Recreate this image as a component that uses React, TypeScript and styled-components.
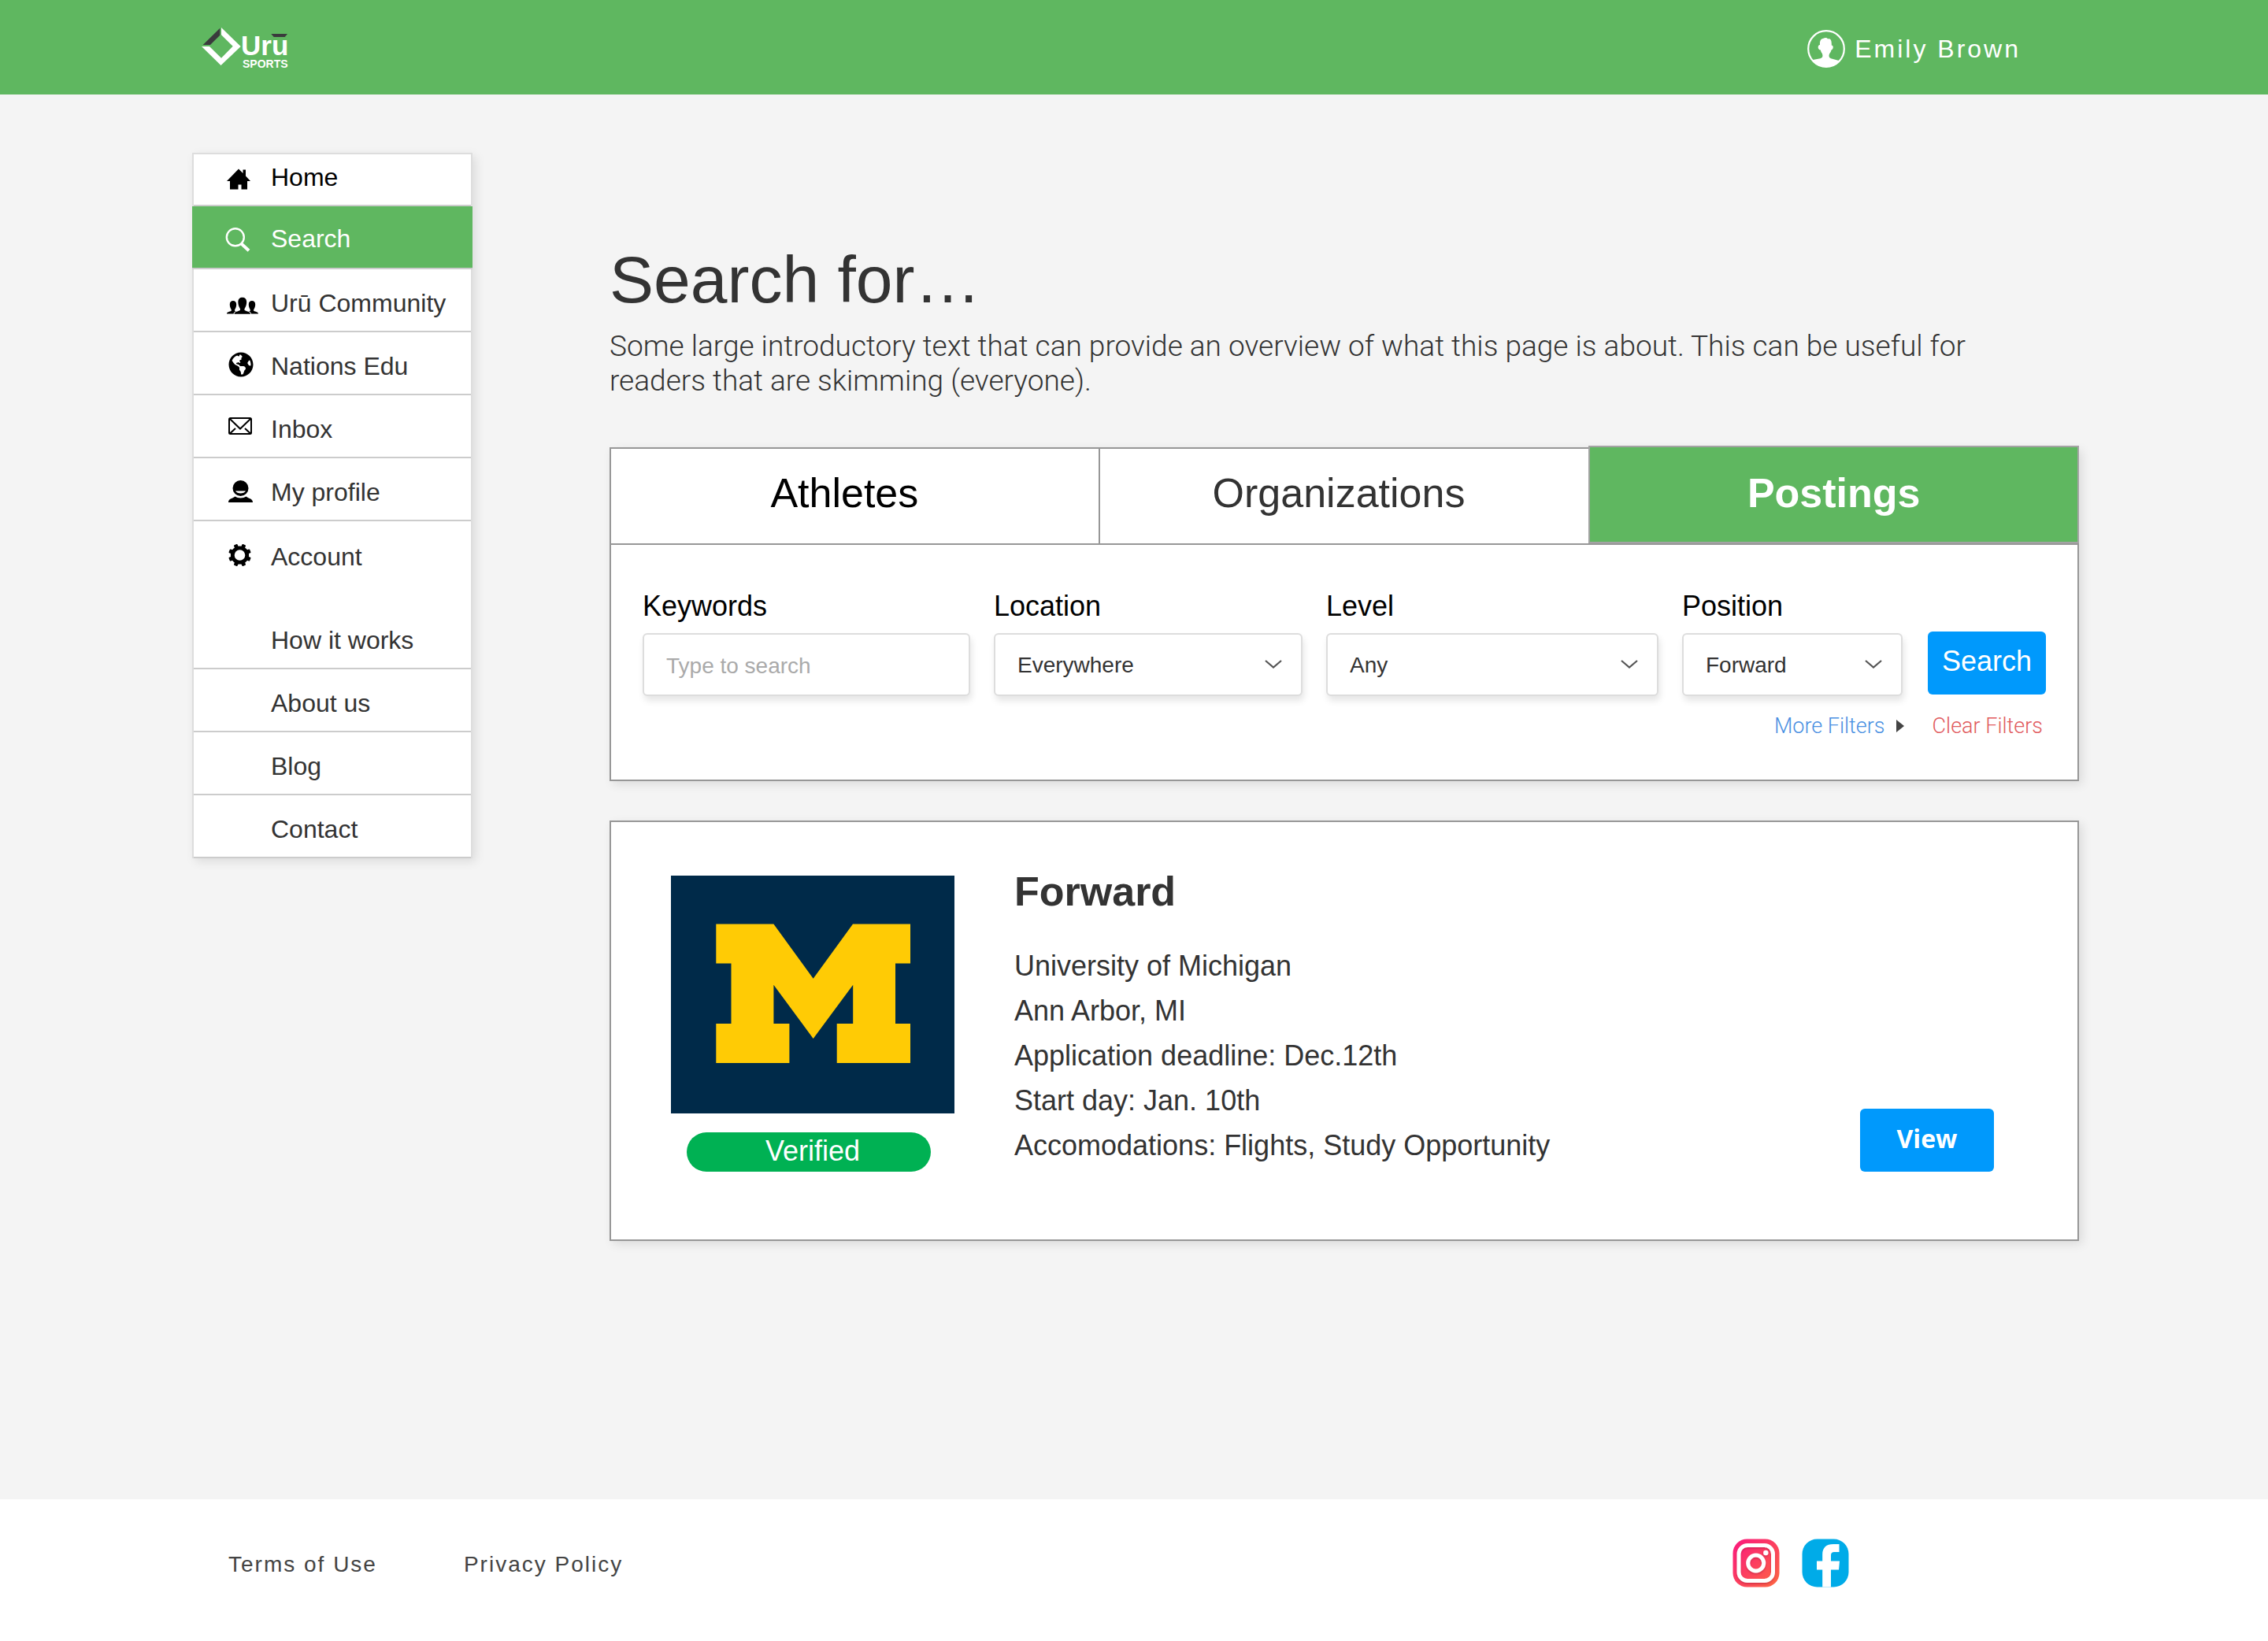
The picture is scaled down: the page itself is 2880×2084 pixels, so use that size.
import React from 'react';
import styled, { createGlobalStyle, css } from 'styled-components';
import { FaGlobeAmericas } from 'react-icons/fa';

const color = {
  green: '#5fb760',
  blue: '#0099fc',
  ink: '#333333',
  page: '#f4f4f4',
  frame: '#979797',
};

const shadow = '4px 4px 12px rgba(0, 0, 0, 0.1)';

const GlobalStyle = createGlobalStyle`
  *, *::before, *::after { box-sizing: border-box; }
  body {
    margin: 0;
    background: ${color.page};
    color: ${color.ink};
    font-family: "Liberation Sans", Arial, sans-serif;
  }
  a { color: inherit; text-decoration: none; }
  button, input, select { font-family: inherit; }
  svg { display: block; flex: none; }
`;

const Page = styled.div`
  display: flex;
  flex-direction: column;
  min-height: 100vh;
`;

/* ---------- header ---------- */

const Header = styled.header`
  display: flex;
  align-items: center;
  justify-content: space-between;
  height: 120px;
  padding: 0 314px 0 256px;
  background: ${color.green};
  color: #fff;
`;

const UserLink = styled.a`
  display: flex;
  align-items: center;
  gap: 12px;
  padding-top: 4px;
  font-size: 32px;
  line-height: 40px;
  letter-spacing: 3px;
`;

const Logo = () => (
  <svg width="112" height="50" viewBox="0 0 112 50" overflow="visible" role="img" aria-label="Urū Sports">
    <path d="M25 0 49.7 24 24.5 48 0 24H10L25 38.7 39.7 23.7 25 9.3Z" fill="#fff" />
    <path d="M23.3.7V9.7L11 22H1.7Z" fill="#3a3a3c" />
    <path d="M88.3 8H109L105.7 12H91.7Z" fill="#3a3a3c" />
    <g fill="#fff" fontFamily="Liberation Sans, Arial, sans-serif" fontWeight="700">
      <text x="50" y="35" fontSize="35">Uru</text>
      <text x="52" y="51" fontSize="14">SPORTS</text>
    </g>
  </svg>
);

const Avatar = () => (
  <svg width="48" height="48" viewBox="0 0 48 48" aria-hidden="true">
    <clipPath id="avatar-ring"><circle cx="24" cy="24" r="23" /></clipPath>
    <circle cx="24" cy="24" r="22.8" fill="none" stroke="#fff" strokeWidth="2.2" />
    <path
      clipPath="url(#avatar-ring)"
      fill="#fff"
      d="M16 19C15.500 13 18 11 20.500 10.800C22 9.600 25 9.600 26 11.400C29.500 11 31 12.500 30.800 19.500C33.500 19.500 33.400 24.500 30.500 25.500C30 28.500 28 29.500 27.600 32C27.400 34.500 28 35.500 30 36.200L40 39L48 48H0L7 38L16.500 36.200C19 35.500 19.600 34.500 19.400 32C19.200 29.500 17.300 28.500 16.800 25.500C13 25 12.600 19.500 16 19Z"
    />
  </svg>
);

/* ---------- sidebar ---------- */

const Body = styled.div`
  flex: 1;
  display: flex;
  align-items: flex-start;
  gap: 174px;
  padding: 74px 240px 0 244px;
`;

const Sidebar = styled.nav`
  flex: none;
  width: 356px;
  border: 2px solid #ddd;
  border-bottom: 0;
  background: #fff;
  box-shadow: ${shadow};
`;

const NavLink = styled.a<{ $kind?: 'first' | 'active' | 'last' }>`
  display: flex;
  gap: 14px;
  padding: 23px 0 15px 40px;
  border-bottom: 2px solid #ccc;
  font-size: 32px;
  line-height: 40px;
  white-space: nowrap;
  ${({ $kind }) => $kind === 'first' && css`
    padding-top: 9px;
    color: #000;
  `}
  ${({ $kind }) => $kind === 'active' && css`
    margin: 0 -2px;
    padding: 21px 0 17px 42px;
    background: ${color.green};
    background-clip: padding-box;
    color: #fff;
  `}
  ${({ $kind }) => $kind === 'last' && css`
    padding: 25px 0 43px 40px;
    border-bottom: 0;
  `}
`;

const NavGlyph = ({ children }: { children?: React.ReactNode }) => (
  <svg width="44" height="40" viewBox="0 0 44 40" fill="#000" aria-hidden="true">{children}</svg>
);

const person = 'M0 28.500C0 25.500 4.500 25.500 6.800 24C8 22.500 4.500 20 4.500 14.500C4.500 10.800 6.500 9 9.500 9C12.500 9 14.500 10.800 14.500 14.500C14.500 20 11 22.500 12.200 24C14.500 25.500 19 25.500 19 28.500Z';

const icons: Record<string, React.ReactNode> = {
  home: <path d="M17 9.500 22.500 15V10.500H26V18.500L32 25H28V35.500H20.500V29.500H16.500V35.500H6V25H2Z" />,
  search: (
    <g fill="none" stroke="#fff">
      <circle cx="12.800" cy="18.300" r="11" strokeWidth="2.400" />
      <path d="M20.500 26.500 30 35.300" strokeWidth="4" />
    </g>
  ),
  community: (
    <g>
      <path transform="translate(2 9.500) scale(.84)" d={person} />
      <path transform="translate(26 9.500) scale(.84)" d={person} />
      <path transform="translate(11.500 3) scale(1.080)" d={person} stroke="#fff" strokeWidth="1.800" paintOrder="stroke" />
    </g>
  ),
  globe: <FaGlobeAmericas x="4" y="2" width="30" height="31" color="#000" />,
  inbox: (
    <g fill="none" stroke="#000" strokeWidth="2">
      <rect x="5" y="6" width="28" height="20" rx="1.500" />
      <path d="M6 7 19 19.500 32 7M6 25.500 13 19M32 25.500 25 19" />
    </g>
  ),
  profile: (
    <g>
      <path d="M4 33C4 28 10 28 12.500 25.500C16 28 23 28 26.500 25.500C29 28 35 28 35 33Z" />
      <circle cx="19.500" cy="15" r="10" />
      <path d="M13 18.500H26C24 22.500 15 22.500 13 18.500Z" fill="#fff" />
    </g>
  ),
  gear: (
    <g>
      <circle cx="18.500" cy="18" r="9.200" fill="none" stroke="#000" strokeWidth="4.800" />
      {[22.5, 67.5, 112.5, 157.5, 202.5, 247.5, 292.5, 337.5].map((turn) => (
        <rect key={turn} x="16" y="3.600" width="5" height="6" rx="1" transform={`rotate(${turn} 18.500 18)`} />
      ))}
    </g>
  ),
};

const navItems: { label: string; icon?: string; kind?: 'first' | 'active' | 'last' }[] = [
  { label: 'Home', icon: 'home', kind: 'first' },
  { label: 'Search', icon: 'search', kind: 'active' },
  { label: 'Urū Community', icon: 'community' },
  { label: 'Nations Edu', icon: 'globe' },
  { label: 'Inbox', icon: 'inbox' },
  { label: 'My profile', icon: 'profile' },
  { label: 'Account', icon: 'gear', kind: 'last' },
  { label: 'How it works' },
  { label: 'About us' },
  { label: 'Blog' },
  { label: 'Contact' },
];

/* ---------- main column ---------- */

const light = css`
  font-family: Roboto, "Liberation Sans", sans-serif;
  font-weight: 300;
`;

const Main = styled.main`
  flex: 1;
  min-width: 0;
  padding: 113px 0 50px;
`;

const Title = styled.h1`
  margin: 0;
  font-size: 84px;
  font-weight: 400;
  line-height: 96px;
`;

const Intro = styled.p`
  ${light}
  max-width: 1780px;
  margin: 15px 0 62px;
  font-size: 37px;
  line-height: 44px;
`;

const Panel = styled.section`
  border: 2px solid ${color.frame};
  background: #fff;
  box-shadow: ${shadow};
`;

const Tabs = styled.div`
  display: grid;
  grid-template-columns: repeat(3, 1fr);
  border-bottom: 2px solid ${color.frame};
`;

const Tab = styled.button<{ $active?: boolean; $divider?: boolean; $trail?: number }>`
  padding: 26px ${({ $trail = 0 }) => $trail}px 34px 0;
  border: 0;
  border-right: ${({ $divider }) => ($divider ? `2px solid ${color.frame}` : '0')};
  background: #fff;
  color: ${({ $divider }) => ($divider ? '#000' : color.ink)};
  font-size: 52px;
  line-height: 60px;
  ${({ $active }) => $active && css`
    margin: -4px -2px 0 0;
    padding: 28px 0 32px;
    border: 2px solid #a3a3a3;
    background: ${color.green};
    color: #fff;
    font-weight: 700;
  `}
`;

const Filters = styled.form`
  padding: 56px 40px 50px;
`;

const FilterRow = styled.div`
  display: grid;
  grid-template-columns: 416fr 392fr 422fr 280fr 152px;
  align-items: end;
  gap: 30px;
`;

const Field = styled.div`
  display: flex;
  flex-direction: column;
  gap: 12px;
  min-width: 0;
`;

const Label = styled.label`
  color: #000;
  font-size: 36px;
  line-height: 44px;
`;

const control = css`
  width: 100%;
  height: 80px;
  border: 2px solid #ddd;
  border-radius: 6px;
  background: #fff;
  box-shadow: 2px 6px 8px rgba(0, 0, 0, 0.1);
  color: ${color.ink};
  font-size: 28px;
`;

const TextBox = styled.input`
  ${control}
  padding: 4px 28px 0;
  &::placeholder { color: #aaa; opacity: 1; }
`;

const SelectWrap = styled.div`
  display: grid;
  align-items: center;
  svg {
    grid-area: 1 / 1;
    justify-self: end;
    margin-right: 26px;
    pointer-events: none;
  }
`;

const Select = styled.select`
  ${control}
  grid-area: 1 / 1;
  appearance: none;
  padding: 0 60px 0 28px;
`;

const Button = styled.button<{ $view?: boolean }>`
  height: 80px;
  padding: 0 0 4px;
  border: 0;
  border-radius: 6px;
  background: ${color.blue};
  color: #fff;
  font-size: 36px;
  ${({ $view }) => $view ? css`
    flex: none;
    align-self: flex-end;
    width: 170px;
    padding-bottom: 6px;
    font-family: "Open Sans", "Noto Sans", sans-serif;
    font-size: 32px;
    font-weight: 700;
  ` : css`
    margin: 0 0 2px 2px;
  `}
`;

const FilterLinks = styled.div`
  display: flex;
  justify-content: flex-end;
  align-items: center;
  gap: 36px;
  margin-top: 20px;
  padding-right: 4px;
`;

const FilterLink = styled.a<{ $tone: string }>`
  ${light}
  display: flex;
  align-items: center;
  gap: 14px;
  color: ${({ $tone }) => $tone};
  font-size: 27px;
  line-height: 36px;
`;

const selects = [
  { id: 'location', label: 'Location', value: 'Everywhere' },
  { id: 'level', label: 'Level', value: 'Any' },
  { id: 'position', label: 'Position', value: 'Forward' },
];

const Chevron = () => (
  <svg width="22" height="12" viewBox="0 0 22 12" aria-hidden="true">
    <path d="M1 1 11 9.500 21 1" fill="none" stroke="#555" strokeWidth="2.200" />
  </svg>
);

/* ---------- posting ---------- */

const Posting = styled(Panel)`
  display: flex;
  gap: 76px;
  margin-top: 50px;
  padding: 68px 106px 86px 76px;
`;

const Badge = styled.div`
  width: 310px;
  margin: 24px 0 0 20px;
  padding: 0 0 2px 10px;
  border-radius: 25px;
  background: #00b153;
  color: #fff;
  font-size: 36px;
  line-height: 48px;
  text-align: center;
`;

const Details = styled.div`
  flex: 1;
  min-width: 0;
`;

const PostingTitle = styled.h2`
  margin: 0 0 46px;
  font-size: 52px;
  font-weight: 700;
  line-height: 40px;
`;

const Facts = styled.ul`
  margin: 0;
  padding: 0;
  list-style: none;
  font-size: 36px;
  line-height: 57px;
`;

const MichiganLogo = () => (
  <svg width="360" height="302" viewBox="0 0 360 302" role="img" aria-label="University of Michigan">
    <path d="M0 0H360V302H0Z" fill="#002a49" />
    <path
      fill="#ffcb05"
      d="M57.300 61.500H130.400L180.700 130.700 231 61.500H304V111.500H285V188H304V238H210.700V188H231.200V138.700L180.700 207 130.400 138.700V188H150.400V238H57.300V188H76.500V111.500H57.300Z"
    />
  </svg>
);

/* ---------- footer ---------- */

const Footer = styled.footer`
  display: flex;
  align-items: center;
  height: 180px;
  padding: 0 532px 18px 290px;
  background: #fff;
  color: #444;
  font-size: 28px;
  letter-spacing: 2px;
`;

const FooterLinks = styled.div`
  flex: 1;
  display: flex;
  gap: 110px;
  padding-top: 4px;
`;

const Social = styled.div`
  display: flex;
  gap: 28px;
`;

const Instagram = () => (
  <svg width="60" height="62" viewBox="0 0 60 62" aria-hidden="true">
    <defs>
      <linearGradient id="insta" x1="0" y1="0" x2="1" y2="1">
        <stop offset="0.100" stopColor="#fb1f78" />
        <stop offset="0.900" stopColor="#fd6047" />
      </linearGradient>
      <filter id="insta-depth" x="-20%" y="-20%" width="140%" height="140%">
        <feDropShadow dx="0" dy="1.500" stdDeviation="1" floodColor="#900030" floodOpacity="0.400" />
      </filter>
    </defs>
    <rect x="0.500" y="0.500" width="59" height="61" rx="18" fill="url(#insta)" />
    <g fill="none" stroke="#fff" strokeWidth="5" filter="url(#insta-depth)">
      <rect x="8" y="8.500" width="43.500" height="45" rx="11" />
      <circle cx="29.700" cy="31" r="10" />
      <circle cx="42.300" cy="18" r="3.200" fill="#fff" stroke="none" />
    </g>
  </svg>
);

const Facebook = () => (
  <svg width="60" height="62" viewBox="0 0 60 62" aria-hidden="true">
    <rect x="0.500" y="0.500" width="59" height="61" rx="19" fill="#00abe8" />
    <path d="M47.500 7H40C31 7 26.200 11.500 26.200 20V28.500H19V39.500H26.200V61.500H37V39.500H47L48 28.500H37V21C37 18.300 38.500 17 41 17H47.500Z" fill="#fff" />
  </svg>
);

export default function App() {
  return (
    <Page>
      <GlobalStyle />
      <Header>
        <a href="#home"><Logo /></a>
        <UserLink href="#profile">
          <Avatar />
          Emily Brown
        </UserLink>
      </Header>

      <Body>
        <Sidebar aria-label="Main">
          {navItems.map(({ label, icon, kind }) => (
            <NavLink key={label} href="#nav" $kind={kind} aria-current={kind === 'active' ? 'page' : undefined}>
              <NavGlyph>{icon && icons[icon]}</NavGlyph>
              {label}
            </NavLink>
          ))}
        </Sidebar>

        <Main>
          <Title>Search for…</Title>
          <Intro>
            Some large introductory text that can provide an overview of what this page is about. This can be
            useful for readers that are skimming (everyone).
          </Intro>

          <Panel>
            <Tabs role="tablist">
              <Tab type="button" role="tab" aria-selected={false} $divider $trail={26}>Athletes</Tab>
              <Tab type="button" role="tab" aria-selected={false} $trail={14}>Organizations</Tab>
              <Tab type="button" role="tab" aria-selected $active>Postings</Tab>
            </Tabs>
            <Filters onSubmit={(event) => event.preventDefault()}>
              <FilterRow>
                <Field>
                  <Label htmlFor="keywords">Keywords</Label>
                  <TextBox id="keywords" type="text" placeholder="Type to search" />
                </Field>
                {selects.map(({ id, label, value }) => (
                  <Field key={id}>
                    <Label htmlFor={id}>{label}</Label>
                    <SelectWrap>
                      <Select id={id} defaultValue={value}>
                        <option>{value}</option>
                      </Select>
                      <Chevron />
                    </SelectWrap>
                  </Field>
                ))}
                <Button type="submit">Search</Button>
              </FilterRow>
              <FilterLinks>
                <FilterLink href="#more" $tone="#4a90e2">
                  More Filters
                  <svg width="10" height="16" viewBox="0 0 10 16" aria-hidden="true">
                    <path d="M0 0 10 8 0 16Z" fill="#444" />
                  </svg>
                </FilterLink>
                <FilterLink href="#clear" $tone="#e15b5e">Clear Filters</FilterLink>
              </FilterLinks>
            </Filters>
          </Panel>

          <Posting as="article">
            <div>
              <MichiganLogo />
              <Badge>Verified</Badge>
            </div>
            <Details>
              <PostingTitle>Forward</PostingTitle>
              <Facts>
                <li>University of Michigan</li>
                <li>Ann Arbor, MI</li>
                <li>Application deadline: Dec.12th</li>
                <li>Start day: Jan. 10th</li>
                <li>Accomodations: Flights, Study Opportunity</li>
              </Facts>
            </Details>
            <Button type="button" $view>View</Button>
          </Posting>
        </Main>
      </Body>

      <Footer>
        <FooterLinks>
          <a href="#terms">Terms of Use</a>
          <a href="#privacy">Privacy Policy</a>
        </FooterLinks>
        <Social>
          <a href="#instagram" aria-label="Instagram"><Instagram /></a>
          <a href="#facebook" aria-label="Facebook"><Facebook /></a>
        </Social>
      </Footer>
    </Page>
  );
}
